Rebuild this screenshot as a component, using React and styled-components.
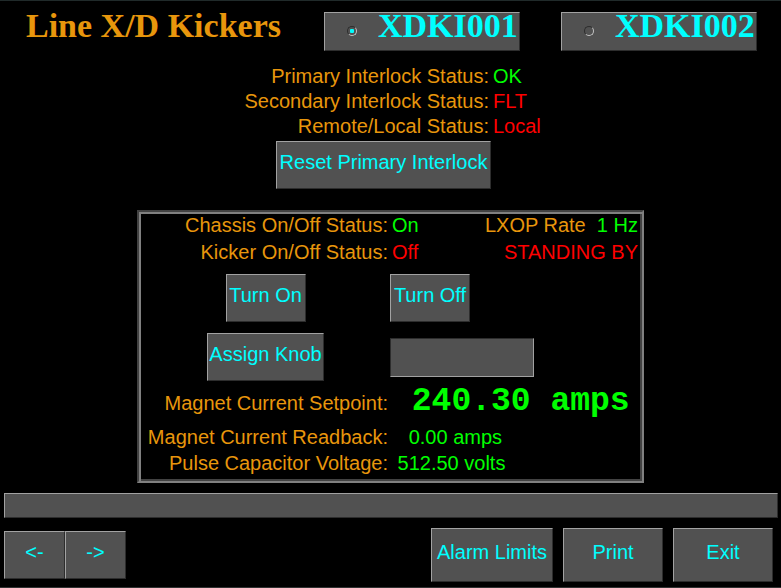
import React, { useState } from "react";
import styled, { createGlobalStyle } from "styled-components";

const color = {
  label: "#e8960c",
  cyan: "#00ffff",
  ok: "#00ff00",
  fault: "#ff0000",
  face: "#515151",
  light: "#a2a2a2",
  dark: "#2d2d2d",
};

const Global = createGlobalStyle`
  *, *::before, *::after { box-sizing: border-box; }
  body {
    margin: 0;
    background: #000;
    font-family: "Liberation Sans", Arial, sans-serif;
    font-size: 20px;
    line-height: 24px;
  }
`;

const Page = styled.main`
  display: flex;
  flex-direction: column;
  min-height: 100vh;
  border-top: 1px solid #202a2a;
  border-bottom: 1px solid #303232;
  background: #000;
`;

const Header = styled.header`
  display: flex;
  align-items: flex-start;
  padding: 5px 24px 0 26px;
`;

const Title = styled.h1`
  flex: 1;
  margin: 0;
  color: ${color.label};
  font: bold 34px/40px "Liberation Serif", "Times New Roman", serif;
  white-space: nowrap;
`;

const Selector = styled.div`
  display: flex;
  gap: 41px;
  padding-top: 6px;
`;

const raised = `
  background: ${color.face};
  border: 1px solid;
  border-color: ${color.light} ${color.dark} ${color.dark} ${color.light};
`;

const Choice = styled.label`
  ${raised}
  display: flex;
  align-items: center;
  gap: 21px;
  width: 196px;
  height: 39px;
  padding: 0 0 2px 22px;
  color: ${color.cyan};
  font: bold 34px/26px "Liberation Serif", "Times New Roman", serif;
`;

const ChoiceText = styled.span`
  align-self: flex-start;
`;

const Radio = styled.input`
  appearance: none;
  display: grid;
  place-items: center;
  flex: none;
  width: 10px;
  height: 10px;
  margin: 0;
  border: 1px solid;
  border-color: ${color.dark} #c4c4c4 #c4c4c4 ${color.dark};
  border-radius: 50%;

  &:checked::before {
    content: "";
    width: 4px;
    height: 4px;
    border-radius: 1px;
    background: ${color.cyan};
  }
`;

const Interlocks = styled.section`
  display: grid;
  grid-template-columns: 352px 1fr;
  column-gap: 4px;
  row-gap: 1px;
  width: 507px;
  margin: 13px auto 0;
`;

const Label = styled.span`
  color: ${color.label};
  text-align: right;
  white-space: nowrap;
`;

const Value = styled.output`
  color: ${(p) => (p.$fault ? color.fault : color.ok)};
  white-space: pre;
`;

const BigValue = styled(Value)`
  font: bold 33px/40px "Liberation Mono", "Courier New", monospace;
`;

const Button = styled.button`
  ${raised}
  height: ${(p) => (p.$tall ? 54 : 48)}px;
  min-width: ${(p) => p.$min || 0}px;
  padding: 0 1px 6px;
  color: ${color.cyan};
  font: inherit;
  white-space: nowrap;
`;

const ResetButton = styled(Button)`
  justify-self: end;
  margin: 2px -2px 0 0;
`;

const Panel = styled.section`
  width: 507px;
  margin: 21px auto 0;
  padding: 1px 2px 6px;
  border: 2px solid;
  border-color: #424242 #808080 #808080 #424242;
  box-shadow: inset 2px 2px 0 #808080, inset -2px -2px 0 #424242;
`;

const PanelRow = styled.div`
  display: grid;
  grid-template-columns: 247px 1fr auto;
  column-gap: 4px;
  align-items: ${(p) => p.$align || "center"};
  padding-right: 2px;
  margin-top: ${(p) => p.$top || 0}px;
`;

const ButtonRow = styled.div`
  display: grid;
  grid-template-columns: 249px 1fr;
  justify-items: start;
  align-items: center;
  margin-top: ${(p) => p.$top}px;
`;

const ButtonCell = styled.div`
  display: grid;
  justify-self: center;
`;

const KnobField = styled.input`
  width: 144px;
  height: 39px;
  padding: 0 4px;
  border: 1px solid;
  border-color: ${color.dark} ${color.light} ${color.light} ${color.dark};
  background: ${color.face};
  color: ${color.cyan};
  font: inherit;
`;

const MessageBar = styled.output`
  ${raised}
  display: block;
  height: 25px;
  margin: 10px 3px 0 4px;
`;

const Footer = styled.footer`
  display: flex;
  align-items: center;
  justify-content: space-between;
  padding: 10px 8px 5px 4px;
`;

const Group = styled.div`
  display: flex;
  gap: ${(p) => p.$gap || 0}px;
`;

const kickers = ["XDKI001", "XDKI002"];

const interlocks = [
  { label: "Primary Interlock Status:", value: "OK" },
  { label: "Secondary Interlock Status:", value: "FLT", fault: true },
  { label: "Remote/Local Status:", value: "Local", fault: true },
];

export default function App() {
  const [kicker, setKicker] = useState(kickers[0]);
  return (
    <>
      <Global />
      <Page>
        <Header>
          <Title>Line X/D Kickers</Title>
          <Selector role="radiogroup" aria-label="Kicker">
            {kickers.map((name) => (
              <Choice key={name}>
                <Radio
                  type="radio"
                  name="kicker"
                  checked={kicker === name}
                  onChange={() => setKicker(name)}
                />
                <ChoiceText>{name}</ChoiceText>
              </Choice>
            ))}
          </Selector>
        </Header>

        <Interlocks>
          {interlocks.map((row) => (
            <React.Fragment key={row.label}>
              <Label>{row.label}</Label>
              <Value $fault={row.fault}>{row.value}</Value>
            </React.Fragment>
          ))}
          <ResetButton type="button" $min={215}>Reset Primary Interlock</ResetButton>
        </Interlocks>

        <Panel>
          <PanelRow>
            <Label>Chassis On/Off Status:</Label>
            <Value>On</Value>
            <span>
              <Label>LXOP Rate</Label>
              <Value>{"  1 Hz"}</Value>
            </span>
          </PanelRow>
          <PanelRow $top={3}>
            <Label>Kicker On/Off Status:</Label>
            <Value $fault>Off</Value>
            <Value $fault>STANDING BY</Value>
          </PanelRow>
          <ButtonRow $top={10}>
            <ButtonCell>
              <Button type="button" $min={80}>Turn On</Button>
            </ButtonCell>
            <Button type="button" $min={80}>Turn Off</Button>
          </ButtonRow>
          <ButtonRow $top={11}>
            <ButtonCell>
              <Button type="button">Assign Knob</Button>
            </ButtonCell>
            <KnobField type="text" aria-label="Knob" />
          </ButtonRow>
          <PanelRow $top={1} $align="baseline">
            <Label>Magnet Current Setpoint:</Label>
            <BigValue>{" 240.30 amps"}</BigValue>
          </PanelRow>
          <PanelRow $top={3}>
            <Label>Magnet Current Readback:</Label>
            <Value>{"   0.00 amps"}</Value>
          </PanelRow>
          <PanelRow $top={2}>
            <Label>Pulse Capacitor Voltage:</Label>
            <Value>{" 512.50 volts"}</Value>
          </PanelRow>
        </Panel>

        <MessageBar />

        <Footer>
          <Group>
            <Button type="button" $min={61}>&lt;-</Button>
            <Button type="button" $min={61}>-&gt;</Button>
          </Group>
          <Group $gap={10}>
            <Button type="button" $tall $min={122}>Alarm Limits</Button>
            <Button type="button" $tall $min={100}>Print</Button>
            <Button type="button" $tall $min={100}>Exit</Button>
          </Group>
        </Footer>
      </Page>
    </>
  );
}
